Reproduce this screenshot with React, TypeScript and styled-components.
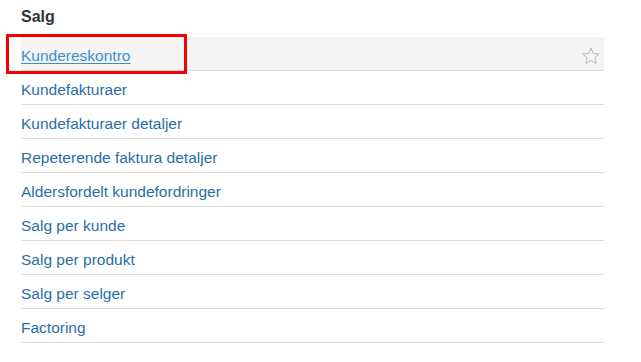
import styled, { createGlobalStyle } from "styled-components";

const GlobalStyle = createGlobalStyle`
  body {
    margin: 0;
    background: #fff;
    font-family: "Liberation Sans", Arial, sans-serif;
  }
`;

const reports = [
  "Kundereskontro",
  "Kundefakturaer",
  "Kundefakturaer detaljer",
  "Repeterende faktura detaljer",
  "Aldersfordelt kundefordringer",
  "Salg per kunde",
  "Salg per produkt",
  "Salg per selger",
  "Factoring",
];

const StarIcon = () => (
  <svg width="20" height="20" viewBox="0 0 24 24" fill="none" stroke="#b8b8b8" strokeWidth="1.2" strokeLinejoin="round">
    <polygon points="12,2.5 14.9,9 21.8,9.6 16.6,14.2 18.1,21 12,17.4 5.9,21 7.4,14.2 2.2,9.6 9.1,9" />
  </svg>
);

export default function App() {
  return (
    <>
      <GlobalStyle />
      <Section>
        <Heading>Salg</Heading>
        <List>
          {reports.map((name, i) => (
            <Row key={name} $active={i === 0}>
              <ReportLink href="#" $active={i === 0}>
                {name}
              </ReportLink>
              {i === 0 && (
                <>
                  <FavButton>
                    <StarIcon />
                  </FavButton>
                  <Highlight />
                </>
              )}
            </Row>
          ))}
        </List>
      </Section>
    </>
  );
}

const Section = styled.section`
  width: 583px;
  padding: 6px 0 0 21px;
`;

const Heading = styled.h2`
  margin: 0;
  height: 31px;
  font-size: 16px;
  font-weight: bold;
  color: #333;
  line-height: 22px;
`;

const List = styled.ul`
  list-style: none;
  margin: 0;
  padding: 0;
`;

const Row = styled.li<{ $active?: boolean }>`
  position: relative;
  display: flex;
  align-items: center;
  justify-content: space-between;
  box-sizing: border-box;
  height: 34px;
  padding-top: 4px;
  border-bottom: 1px solid #dedede;
  background: ${(p) => (p.$active ? "#f4f4f4" : "transparent")};
`;

const ReportLink = styled.a<{ $active?: boolean }>`
  font-size: 15.5px;
  color: ${(p) => (p.$active ? "#3b8fcc" : "#2a6ea6")};
  text-decoration: ${(p) => (p.$active ? "underline" : "none")};
  text-underline-offset: 2px;
`;

const FavButton = styled.span`
  display: flex;
  margin-right: 3px;
`;

const Highlight = styled.div`
  position: absolute;
  left: -15px;
  top: -3px;
  width: 175px;
  height: 34px;
  border: 3px solid #f00000;
  pointer-events: none;
`;
